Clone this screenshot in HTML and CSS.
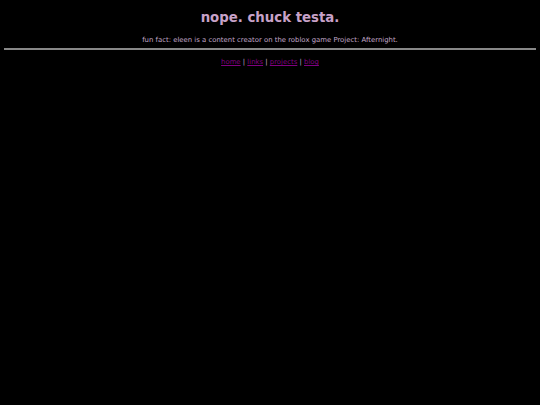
FILE: index.html
```html
<!DOCTYPE html>
<html>
<head>
<meta charset="utf-8">
<link rel="stylesheet" href="styles.css">
</head>
<body>
<header class="top">
<h1 class="title">nope. chuck testa.</h1>
<p class="fact">fun fact: eleen is a content creator on the roblox game Project: Afternight.</p>
</header>
<hr class="rule">
<nav class="nav"><a href="#">home</a> | <a href="#">links</a> | <a href="#">projects</a> | <a href="#">blog</a></nav>
</body>
</html>
```
FILE: styles.css
```css
html, body { background: #000; }
body {
  margin: 0;
  padding: 0 4px;
  font-family: "DejaVu Sans", sans-serif;
  color: #c8a2c8;
}
.top { text-align: center; padding-top: 10px; }
.title {
  font-size: 13.3px;
  font-weight: bold;
  margin: 0;
  line-height: 16px;
  color: #c8a2c8;
}
.fact {
  font-size: 6.9px;
  margin: 10px 0 0;
  line-height: 9px;
  color: #c0a8c8;
}
.rule {
  margin: 3px 0 0;
  border: 0;
  height: 2px;
  background: #888;
}
.nav {
  text-align: center;
  font-size: 6.9px;
  line-height: 9px;
  margin-top: 8px;
  color: #c0a8c8;
}
.nav a { color: #800080; }
```
